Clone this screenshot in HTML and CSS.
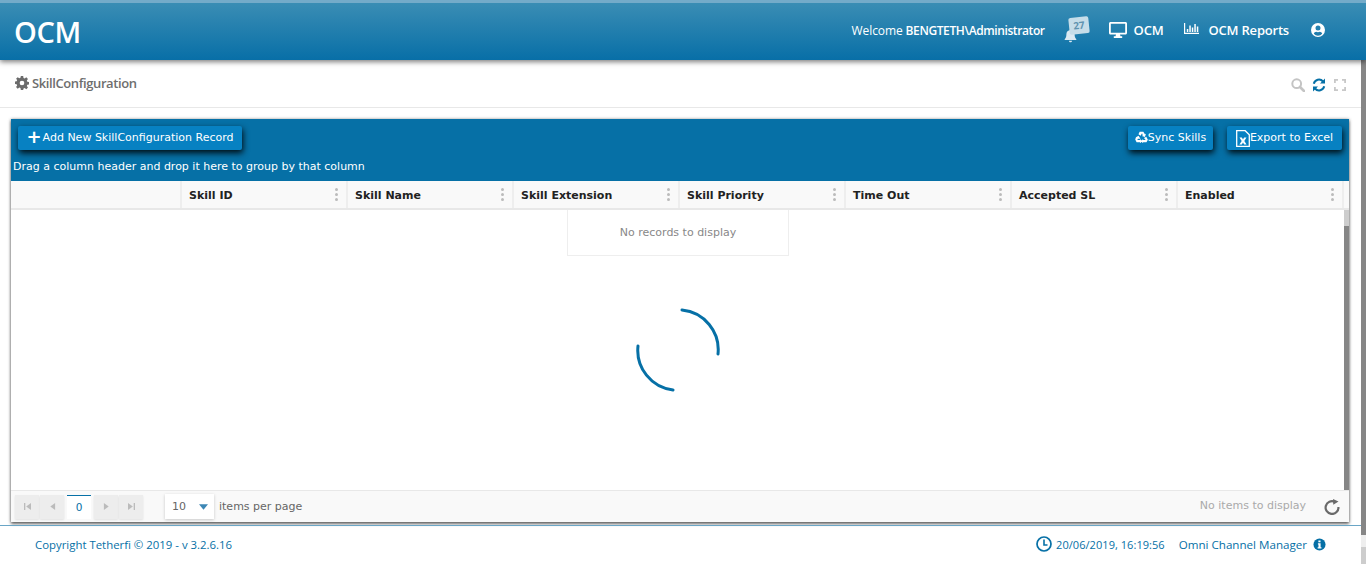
FILE: index.html
```html
<!DOCTYPE html>
<html lang="en">
<head>
<meta charset="utf-8">
<title>SkillConfiguration</title>
<link rel="stylesheet" href="styles.css">
</head>
<body>
<div class="app">
  <div class="main">
    <header class="topbar">
      <div class="logo">OCM</div>
      <nav class="topnav">
        <span class="welcome">Welcome <b>BENGTETH\Administrator</b></span>
        <span class="bell">
          <svg class="bell-icon" viewBox="0 0 16 16"><path fill="#dbe9f2" d="M8 1.500c.6 0 1 .4 1 1 2 .4 3.400 2 3.400 4.200 0 3 .6 4.100 1.800 5.300v.8H1.800V12C3 10.800 3.600 9.700 3.600 6.700 3.600 4.500 5 2.900 7 2.500c0-.6.400-1 1-1zM6.300 13.500h3.400c0 1-.8 1.600-1.700 1.600s-1.700-.6-1.700-1.600z"/></svg>
          <span class="badge">27</span>
        </span>
        <span class="navitem nav-ocm">
          <svg class="nav-desktop" viewBox="0 0 18 16"><path fill="#fff" d="M1.500 0h15C17.300 0 18 .7 18 1.500v9.500c0 .8-.7 1.500-1.500 1.500H11l.5 1.700h1.700V16H4.800v-1.800h1.700L7 12.500H1.500C.7 12.500 0 11.800 0 11V1.500C0 .7.700 0 1.500 0zM1.800 1.800v8.900h14.400V1.800z"/></svg>
          OCM
        </span>
        <span class="navitem nav-rep">
          <svg class="nav-chart" viewBox="0 0 15 11"><path fill="#fff" d="M0 0h1.200v9.800H15V11H0zM2.800 6h1.500v3H2.800zM5.300 2.500h1.500V9H5.300zM7.800 4.500h1.500V9H7.800zM10.300 1h1.500v8h-1.500zM12.800 3.500h1.500V9h-1.500z"/></svg>
          OCM Reports
        </span>
        <svg class="nav-user" viewBox="0 0 14 14"><path fill="#fff" fill-rule="evenodd" d="M7 0a7 7 0 1 1 0 14A7 7 0 0 1 7 0zm0 2.600a2.500 2.500 0 1 0 0 5 2.500 2.500 0 0 0 0-5zM2.800 10.800A5.400 5.400 0 0 0 7 12.800a5.400 5.400 0 0 0 4.200-2c-.3-1.300-1.300-2.100-2.500-2.100-.5.300-1 .5-1.700.5s-1.200-.2-1.700-.5c-1.200 0-2.200.8-2.500 2.100z"/></svg>
      </nav>
    </header>

    <div class="subbar">
      <div class="title">
        <svg class="gear" viewBox="0 0 24 24"><path fill="#6b6b6b" fill-rule="evenodd" d="M10 0h4l.6 3.300 2 .8L19.400 2.200l2.800 2.800-1.900 2.800.8 2 3.300.6v4l-3.300.6-.8 2 1.900 2.800-2.800 2.800-2.800-1.900-2 .8L14 24h-4l-.6-3.300-2-.8-2.800 1.900L1.800 19l1.900-2.800-.8-2L0 13.600v-4l2.900-.6.8-2L1.800 4.900 4.600 2.100l2.800 1.900 2-.8zM12 8a4 4 0 1 0 0 8 4 4 0 0 0 0-8z"/></svg>
        <span>SkillConfiguration</span>
      </div>
      <div class="tools">
        <svg class="tool tool-search" viewBox="0 0 14 14"><circle cx="5.700" cy="5.700" r="4.400" fill="none" stroke="#c4c4c4" stroke-width="2"/><path d="M9 9l4 4" stroke="#c4c4c4" stroke-width="2.600" stroke-linecap="round"/></svg>
        <svg class="tool tool-sync" viewBox="0 0 14 14"><path fill="none" stroke="#0670a6" stroke-width="2" d="M1.800 5.800A5.300 5.300 0 0 1 11 3.500"/><path fill="#0670a6" d="M13 .6v5H8z"/><path fill="none" stroke="#0670a6" stroke-width="2" d="M12.200 8.200A5.300 5.300 0 0 1 3 10.500"/><path fill="#0670a6" d="M1 13.400v-5h5z"/></svg>
        <svg class="tool tool-expand" viewBox="0 0 12 12"><path fill="none" stroke="#c8c8c8" stroke-width="1.800" d="M.9 4V.9H4M8 .9h3.100V4M11.100 8v3.100H8M4 11.100H.9V8"/></svg>
      </div>
    </div>

    <section class="content">
      <div class="grid">
        <div class="toolbar">
          <div class="toolbar-row">
            <button class="btn btn-add" type="button"><span class="plus">+</span>Add New SkillConfiguration Record</button>
            <div class="toolbar-right">
              <button class="btn btn-sync" type="button">
                <svg class="btn-recycle" viewBox="0 0 14 13"><path fill="#fff" d="M5 .8h4l1.700 2.800 1.100-.6-1 3.400-3.400-.9 1-.6L7.600 2.500 6 5.100 3.700 3.600zM1 6.700l2.800-1.600 2.100 3.200H3.100L2.500 9.700l2.900 0v-1.100l2.400 2.400-2.400 2.300v-1.200H1.700L.2 9.300zM9.700 7.500l2.500-1.300 1.700 3.200-1.500 2.700H8.700v1.200L6.500 11l2.200-2.300v1.100h2.800z"/></svg>Sync Skills
              </button>
              <button class="btn btn-export" type="button">
                <svg class="btn-excel" viewBox="0 0 14 17"><path fill="none" stroke="#fff" stroke-width="1.300" d="M.7.7h8.500l4.100 4.100v11.500H.7z"/><path fill="#fff" d="M3.500 7.500h2.400L7 9.500l1.100-2h2.400L8.300 11l2.300 3.500H8.200L7 12.500l-1.200 2H3.400L5.700 11z"/></svg>Export to Excel
              </button>
            </div>
          </div>
          <div class="group-hint">Drag a column header and drop it here to group by that column</div>
        </div>

        <div class="thead">
          <div class="th th-blank"></div>
          <div class="th">Skill ID<span class="dots"><i></i><i></i><i></i></span></div>
          <div class="th">Skill Name<span class="dots"><i></i><i></i><i></i></span></div>
          <div class="th">Skill Extension<span class="dots"><i></i><i></i><i></i></span></div>
          <div class="th">Skill Priority<span class="dots"><i></i><i></i><i></i></span></div>
          <div class="th">Time Out<span class="dots"><i></i><i></i><i></i></span></div>
          <div class="th">Accepted SL<span class="dots"><i></i><i></i><i></i></span></div>
          <div class="th">Enabled<span class="dots"><i></i><i></i><i></i></span></div>
        </div>

        <div class="tbody">
          <div class="tbody-main">
            <div class="norecords">No records to display</div>
            <svg class="spinner" viewBox="0 0 84 84"><path fill="none" stroke="#0670a6" stroke-width="3" stroke-linecap="round" d="M46 2A40 40 0 0 1 82 46M37 82A40 40 0 0 1 2 38"/></svg>
          </div>
          <div class="vscroll"><div class="vthumb"></div></div>
        </div>

        <div class="pager">
          <div class="pager-nav">
            <span class="pbtn"><svg viewBox="0 0 8 8"><path fill="#bbb" d="M0 0h1.500v8H0zM8 0v8L2.500 4z"/></svg></span>
            <span class="pbtn pbtn-prev"><svg viewBox="0 0 8 8"><path fill="#bbb" d="M7 0v8L1.500 4z"/></svg></span>
            <span class="pcur">0</span>
            <span class="pbtn"><svg viewBox="0 0 8 8"><path fill="#bbb" d="M1 0v8l5.500-4z"/></svg></span>
            <span class="pbtn"><svg viewBox="0 0 8 8"><path fill="#bbb" d="M8 0H6.500v8H8zM0 0v8l5.500-4z"/></svg></span>
          </div>
          <div class="psize"><span>10</span><svg viewBox="0 0 10 6"><path fill="#3d87b5" d="M0 0h10L5 6z"/></svg></div>
          <span class="pp-label">items per page</span>
          <span class="pinfo">No items to display</span>
          <svg class="preload" viewBox="0 0 16 16"><path fill="none" stroke="#6a6a6a" stroke-width="2.200" d="M10.800 2.800A6.400 6.400 0 1 0 14.400 8"/><path fill="#6a6a6a" d="M9 0l5.500 2.600L9.300 5.800z"/></svg>
        </div>
      </div>
    </section>

    <footer class="footer">
      <span class="copy">Copyright Tetherfi © 2019 - v 3.2.6.16</span>
      <div class="foot-right">
        <svg class="clock" viewBox="0 0 16 16"><circle cx="8" cy="8" r="7" fill="none" stroke="#0670a6" stroke-width="1.700"/><path fill="none" stroke="#0670a6" stroke-width="1.600" d="M8 3.500V9H11.500"/></svg>
        <span class="stamp">20/06/2019, 16:19:56</span>
        <span class="product">Omni Channel Manager</span>
        <svg class="info" viewBox="0 0 14 14"><circle cx="7" cy="7" r="6.500" fill="#0670a6"/><path fill="#fff" d="M5.800 2.600h2.300v2H5.800zM5.300 5.700h2.900v4.200h.9v1.300H5v-1.300h.9V7H5.300z"/></svg>
      </div>
    </footer>
  </div>
  <aside class="pagescroll"><div class="ps-top"></div><div class="ps-thumb"></div><div class="ps-gap"></div><div class="ps-bot"></div></aside>
</div>
</body>
</html>
```
FILE: styles.css
```css
* { box-sizing: border-box; }
html, body { margin: 0; padding: 0; height: 564px; overflow: hidden; background: #fff; }
body { font-family: "DejaVu Sans", sans-serif; }

.app { display: flex; height: 564px; }
.main { width: 1361px; display: flex; flex-direction: column; }

.pagescroll { width: 5px; display: flex; flex-direction: column; }
.ps-top { height: 17px; background: #cdcdcd; }
.ps-thumb { height: 518px; background: #868686; }
.ps-gap { height: 12px; background: #eeeeee; }
.ps-bot { height: 17px; background: #cdcdcd; }

.topbar {
  height: 60px; flex: none; display: flex; align-items: center; justify-content: space-between;
  border-top: 3px solid #74abc9; background: linear-gradient(#3a8db4, #086fa7);
  box-shadow: 0 2px 5px rgba(0,0,0,.5); padding-left: 14px; position: relative; z-index: 2; color: #fff;
  width: 1366px;
}
.logo { font: 600 29px "Open Sans", sans-serif; letter-spacing: -.3px; margin-top: -1px; }
.topnav { display: flex; align-items: center; margin-right: 41px; font-family: "Open Sans", sans-serif; font-size: 13px; margin-top: -3px; }
.welcome { font-size: 12px; letter-spacing: -.1px; }
.welcome b { font-size: 12px; font-weight: 600; letter-spacing: -.4px; }
.bell { position: relative; width: 26px; height: 26px; margin-left: 19px; }
.bell-icon { position: absolute; left: -1px; top: 11px; width: 15px; height: 15px; }
.badge { position: absolute; left: 5px; top: 0; width: 20px; height: 17px; background: #c6dde9; color: #5f93b0; font-size: 10px; font-weight: 700; text-align: center; line-height: 16px; transform: rotate(-6deg); border-radius: 2px; }
.navitem { display: flex; align-items: center; font-weight: 600; letter-spacing: -.2px; }
.nav-ocm { margin-left: 19px; }
.nav-desktop { width: 18px; height: 16px; margin-right: 7px; }
.nav-rep { margin-left: 21px; }
.nav-chart { width: 15px; height: 11px; margin-right: 9px; margin-top: -3px; }
.nav-user { width: 14px; height: 14px; margin-left: 22px; }

.subbar { height: 48px; flex: none; display: flex; align-items: center; justify-content: space-between; border-bottom: 1px solid #e8e8e8; padding: 0 15px 0 15px; }
.title { display: flex; align-items: center; color: #6e6e6e; font: 600 13px "Open Sans", sans-serif; letter-spacing: -.4px; margin-top: -2px; }
.gear { width: 14px; height: 14px; margin-right: 3px; }
.tools { display: flex; align-items: center; margin-top: 2px; }
.tool { display: block; }
.tool-search { width: 14px; height: 14px; }
.tool-sync { width: 14px; height: 14px; margin-left: 7px; }
.tool-expand { width: 12px; height: 12px; margin-left: 8px; }

.content { flex: none; padding: 11px 12px 0 11px; height: 414px; }
.grid { height: 403px; display: flex; flex-direction: column; box-shadow: 0 2px 3px rgba(0,0,0,.55), 0 0 3px rgba(0,0,0,.35); background: #fff; }

.toolbar { height: 62px; flex: none; background: #0670a6; color: #fff; padding: 7px 7px 0 2px; }
.toolbar-row { display: flex; justify-content: space-between; }
.toolbar-right { display: flex; gap: 14px; }
.btn { height: 24px; border: 0; padding: 0 0 2px; display: flex; align-items: center; justify-content: center; color: #fff; background: #0781c2; border-radius: 2px; font: 11px "DejaVu Sans", sans-serif; box-shadow: 1px 3px 6px rgba(0,0,0,.9); }
.btn-add { width: 224px; margin-left: 5px; }
.plus { font-size: 18px; font-weight: 700; line-height: 20px; margin-right: 1px; }
.btn-sync { width: 85px; }
.btn-export { width: 115px; }
.btn-recycle { width: 13px; height: 12px; }
.btn-excel { width: 14px; height: 17px; margin-top: 2px; }
.group-hint { font-size: 11px; margin-top: 10px; line-height: 14px; }

.thead { height: 29px; flex: none; display: grid; grid-template-columns: 171px repeat(7, 166px) 1fr; background: #f9f9f9; border-bottom: 2px solid #e8e8e8; }
.th { position: relative; display: flex; align-items: center; padding: 2px 0 0 7px; font-size: 11px; font-weight: 700; color: #222; border-right: 2px solid #eeeeee; }
.th-blank { padding: 0; }
.dots { position: absolute; right: 8px; top: 7px; display: flex; flex-direction: column; gap: 2px; }
.dots i { display: block; width: 3px; height: 3px; border-radius: 50%; background: #bbb; }

.tbody { flex: 1; display: flex; min-height: 0; }
.tbody-main { flex: 1; position: relative; }
.norecords { width: 222px; height: 46px; margin-left: 556px; border: 1px solid #eeeeee; border-top: 0; display: flex; align-items: center; justify-content: center; color: #888; font-size: 11px; }
.spinner { position: absolute; left: 625px; top: 98px; width: 84px; height: 84px; }
.vscroll { width: 5px; background: #cdcdcd; padding-top: 16px; }
.vthumb { height: 100%; background: #868686; }

.pager { height: 32px; flex: none; display: flex; align-items: center; background: #f9f9f9; border-top: 1px solid #e8e8e8; padding: 0 9px 0 4px; font-size: 11px; color: #666; }
.pager-nav { display: flex; align-items: center; }
.pbtn { width: 24px; height: 24px; margin-right: 1px; display: flex; align-items: center; justify-content: center; background: #ededed; box-shadow: 0 1px 2px rgba(0,0,0,.1); }
.pbtn-prev { margin-right: 3px; }
.pbtn svg { width: 7px; height: 7px; }
.pcur { width: 24px; height: 24px; margin-right: 3px; display: flex; align-items: center; justify-content: center; background: #fff; border-top: 1px solid #0670a6; color: #0670a6; font-size: 10.500px; }
.psize { width: 49px; height: 25px; margin-left: 21px; display: flex; align-items: center; justify-content: space-between; padding: 0 6px 0 7px; background: #fff; box-shadow: 0 1px 3px rgba(0,0,0,.2); }
.psize svg { width: 9px; height: 6px; }
.pp-label { margin-left: 5px; }
.pinfo { margin-left: auto; margin-bottom: 2px; color: #aaa; }
.preload { width: 16px; height: 16px; margin-left: 18px; }

.footer { flex: 1; margin-top: 3px; border-top: 1px solid #6aa6c6; width: 1361px; display: flex; align-items: center; justify-content: space-between; padding: 0 35px 2px 35px; color: #0670a6; font: 11.400px "Open Sans", sans-serif; }
.foot-right { display: flex; align-items: center; }
.clock { width: 16px; height: 16px; margin-right: 4px; }
.stamp { font-size: 11px; letter-spacing: .05px; }
.product { margin-left: 14px; font-size: 11.600px; }
.info { width: 13px; height: 13px; margin-left: 6px; }
```
